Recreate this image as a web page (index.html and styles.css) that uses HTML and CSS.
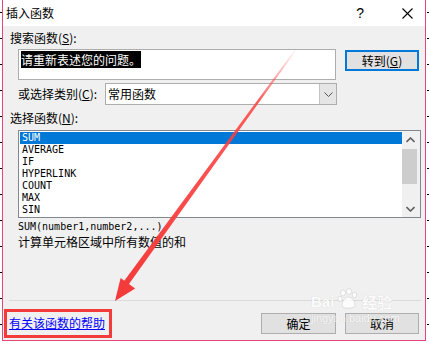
FILE: index.html
```html
<!DOCTYPE html>
<html>
	<head>
		<title>插入函数</title>
		<link rel="stylesheet" href="styles.css">
	</head>
	<body>
		<div class="dialog">
			<div class="titlebar">
				<span class="title">插入函数</span>
				<span class="help">?</span>
				<svg class="close" width="11" height="11" viewBox="0 0 11 11">
					<path d="M0.5 0.5 L10.5 10.5 M10.5 0.5 L0.5 10.5" stroke="#000" stroke-width="1.1" fill="none" />
				</svg>
			</div>
			<div class="content">
				<div class="label">搜索函数(<u>S</u>):</div>
				<div class="search-row">
					<div class="search-box"><span class="selection">请重新表述您的问题。</span></div>
					<button class="btn btn-go">转到(<u>G</u>)</button>
				</div>
				<div class="category-row">
					<span class="category-label">或选择类别(<u>C</u>):</span>
					<div class="combo">
						<span class="combo-value">常用函数</span>
						<span class="combo-btn">
							<svg width="9" height="5" viewBox="0 0 9 5"><path d="M0.5 0.5 L4.5 4.5 L8.5 0.5" stroke="#555" fill="none" /></svg>
						</span>
					</div>
				</div>
				<div class="label label-list">选择函数(<u>N</u>):</div>
				<div class="list">
					<ul class="items">
						<li class="selected">SUM</li>
						<li>AVERAGE</li>
						<li>IF</li>
						<li>HYPERLINK</li>
						<li>COUNT</li>
						<li>MAX</li>
						<li>SIN</li>
					</ul>
					<div class="scrollbar">
						<span class="scroll-arrow">
							<svg width="9" height="6" viewBox="0 0 9 6"><path d="M0.5 5 L4.5 1 L8.5 5" stroke="#606060" stroke-width="1.6" fill="none" /></svg>
						</span>
						<span class="track"><span class="thumb"></span></span>
						<span class="scroll-arrow">
							<svg width="9" height="6" viewBox="0 0 9 6"><path d="M0.5 1 L4.5 5 L8.5 1" stroke="#606060" stroke-width="1.6" fill="none" /></svg>
						</span>
					</div>
				</div>
				<div class="syntax">SUM(number1,number2,...)</div>
				<div class="desc">计算单元格区域中所有数值的和</div>
				<div class="footer">
					<div class="separator"></div>
					<div class="footer-row">
						<span class="mark"><a href="#" class="help-link">有关该函数的帮助</a></span>
						<div class="buttons">
							<button class="btn btn-ok">确定</button>
							<button class="btn btn-cancel">取消</button>
						</div>
					</div>
				</div>
			</div>
		</div>

		<!-- watermark -->
		<div class="watermark">
			<div class="wm-logo">
				<span>Bai</span>
				<svg class="paw" width="22" height="22" viewBox="0 0 22 22">
					<g fill="#fff" stroke="#d2d2d2" stroke-width="0.8">
						<ellipse cx="6" cy="5" rx="2.5" ry="3" />
						<ellipse cx="12" cy="3.5" rx="2.5" ry="3" />
						<ellipse cx="17.5" cy="7" rx="2.3" ry="2.8" />
						<ellipse cx="3" cy="11" rx="2.2" ry="2.7" />
						<path d="M5 18 C5 12 9 9 11.5 9 C14 9 18 12 18 18 C18 21 5 21 5 18 Z" />
					</g>
				</svg>
				<span class="wm-cn">经验</span>
			</div>
			<div class="wm-url">jingyan.baidu.com</div>
		</div>

		<!-- red annotation arrow -->
		<svg class="arrow" width="429" height="343" viewBox="0 0 429 343">
			<defs>
				<linearGradient id="fade" gradientUnits="userSpaceOnUse" x1="297" y1="48" x2="124" y2="286">
					<stop offset="0" stop-color="#ff4a4a" stop-opacity="0" />
					<stop offset="0.22" stop-color="#ff4040" stop-opacity="0.85" />
					<stop offset="1" stop-color="#f33b3b" stop-opacity="1" />
				</linearGradient>
			</defs>
			<polygon points="296.4,47.6 297.6,48.4 126.3,287.8 121.7,284.2" fill="url(#fade)" />
			<polygon points="115,301 120.6,277.9 135.2,288.5" fill="#f33b3b" />
		</svg>
	</body>
</html>
```

FILE: styles.css
```css
body {
	margin: 0;
	width: 429px;
	height: 343px;
	overflow: hidden;
	position: relative;
	font-family: "Noto Sans CJK SC", "Liberation Sans", sans-serif;
	font-size: 12px;
	color: #000;
	background-color: #fff;
	background-image:
		repeating-linear-gradient(to bottom, #000 0 1px, transparent 1px 26px),
		repeating-linear-gradient(to bottom, #000 0 1px, transparent 1px 26px);
	background-size: 2px 100%, 2px 100%;
	background-position: 0 12px, 427px 12px;
	background-repeat: no-repeat;
}

.dialog {
	margin-left: 2px;
	width: 422px;
	height: 340px;
	border: 1px solid #e6457a;
	border-top: none;
	background-color: #f0f0f0;
	display: flex;
	flex-direction: column;
}

.titlebar {
	height: 26px;
	background-color: #fff;
	display: flex;
	align-items: center;
	padding-left: 3px;
	flex-shrink: 0;
}

.title {
	flex: 1;
	line-height: 14px;
}

.help {
	font-family: "Liberation Sans", sans-serif;
	font-size: 14px;
	line-height: 14px;
	margin-right: 38px;
}

.close {
	margin-right: 12px;
}

.content {
	flex: 1;
	display: flex;
	flex-direction: column;
	padding-top: 5px;
}

.label {
	margin-left: 7px;
	line-height: 14px;
	height: 14px;
}

.search-row {
	display: flex;
	align-items: flex-start;
	margin: 4px 0 0 15px;
}

.search-box {
	width: 318px;
	height: 31px;
	box-sizing: border-box;
	border: 1px solid #adadad;
	background-color: #fff;
	padding: 3px 0 0 2px;
	line-height: 14px;
}

.selection {
	background-color: #000;
	color: #fff;
}

.btn {
	font-family: "Noto Sans CJK SC", sans-serif;
	font-size: 12px;
	line-height: 14px;
	height: 21px;
	box-sizing: border-box;
	background-color: #e1e1e1;
	border: 1px solid #adadad;
	padding: 0;
	color: #000;
}

.btn-go {
	width: 74px;
	margin: 1px 0 0 9px;
	border: 2px solid #0078d7;
}

.category-row {
	display: flex;
	align-items: center;
	margin: 3px 0 0 15px;
	height: 22px;
}

.category-label {
	width: 87px;
	line-height: 14px;
}

.combo {
	width: 232px;
	height: 22px;
	box-sizing: border-box;
	border: 1px solid #adadad;
	background-color: #fff;
	display: flex;
	align-items: center;
}

.combo-value {
	flex: 1;
	padding-left: 2px;
	line-height: 14px;
}

.combo-btn {
	width: 17px;
	height: 20px;
	box-sizing: border-box;
	background-color: #e5e5e5;
	border-left: 1px solid #c4c4c4;
	display: flex;
	align-items: center;
	justify-content: center;
}

.label-list {
	margin-top: 6px;
}

.list {
	margin: 5px 0 0 15px;
	width: 403px;
	height: 88px;
	box-sizing: border-box;
	border: 1px solid #828790;
	background-color: #fff;
	display: flex;
}

.items {
	flex: 1;
	list-style: none;
	margin: 0;
	padding: 1px 0 0 1px;
}

.items li {
	height: 12px;
	line-height: 12px;
	padding-left: 2px;
	font-family: "DejaVu Sans Mono", monospace;
	font-size: 10px;
}

.items li.selected {
	background-color: #0078d7;
	color: #fff;
}

.scrollbar {
	width: 18px;
	background-color: #f0f0f0;
	display: flex;
	flex-direction: column;
}

.scroll-arrow {
	height: 17px;
	display: flex;
	align-items: center;
	justify-content: center;
	padding-right: 2px;
}

.track {
	flex: 1;
	padding-top: 1px;
}

.thumb {
	display: block;
	width: 15px;
	height: 35px;
	background-color: #cdcdcd;
}

.syntax {
	margin: 3px 0 0 15px;
	font-family: "DejaVu Sans Mono", monospace;
	font-size: 10px;
	line-height: 12px;
}

.desc {
	margin: 2px 0 0 15px;
	line-height: 14px;
}

.footer {
	margin-top: auto;
	padding-bottom: 2px;
}

.separator {
	height: 1px;
	background-color: #dadada;
	margin: 0 4px 8px 6px;
}

.footer-row {
	display: flex;
	align-items: center;
	justify-content: space-between;
	height: 29px;
}

.mark {
	margin-left: 1px;
	width: 108px;
	height: 29px;
	box-sizing: border-box;
	border: 3px solid #f33b3b;
	padding: 0 0 2px 2px;
	display: flex;
	align-items: center;
}

.help-link {
	color: #0000ff;
	line-height: 14px;
}

.buttons {
	display: flex;
	gap: 9px;
	margin-right: 6px;
}

.btn-ok {
	width: 75px;
}

.btn-cancel {
	width: 74px;
}

.watermark {
	position: absolute;
	left: 311px;
	top: 288px;
	color: #fff;
	text-shadow: 0 0 1px rgba(0, 0, 0, 0.18);
	opacity: 0.8;
	pointer-events: none;
}

.wm-logo {
	display: flex;
	align-items: flex-end;
	font-family: "Liberation Sans", sans-serif;
	font-weight: bold;
	font-size: 15px;
	line-height: 16px;
}

.paw {
	margin: 0 1px 0 3px;
}

.wm-cn {
	font-family: "Noto Sans CJK SC", sans-serif;
	font-size: 15px;
	margin-left: 2px;
}

.wm-url {
	font-family: "Liberation Sans", sans-serif;
	font-size: 11px;
	line-height: 12px;
	margin-top: 2px;
}

.arrow {
	position: absolute;
	left: 0;
	top: 0;
	pointer-events: none;
}
```
